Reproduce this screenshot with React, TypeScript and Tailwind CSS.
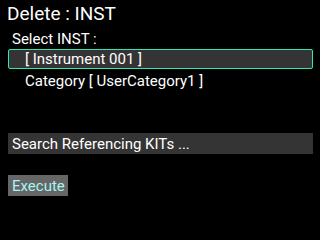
import React from "react";

export default function App() {
  return (
    <div className="w-[320px] h-[240px] bg-black text-white overflow-hidden font-['Roboto',sans-serif]">
      <div className="pl-[7px] pt-[3px] text-[19px] leading-[21px]">Delete : INST</div>
      <div className="pl-[12px] pt-[6px] text-[15px] leading-[18px]">Select INST :</div>
      <div className="mt-[1px] ml-[8px] w-[305px] h-[20px] rounded-[2px] border border-[#2ee6b8] bg-[#343434] flex items-center pl-[16px] text-[15px] leading-[18px]">
        [ Instrument 001 ]
      </div>
      <div className="pl-[25px] pt-[3px] text-[15px] leading-[18px]">Category [ UserCategory1 ]</div>
      <div className="mt-[43px] ml-[8px] w-[305px] h-[21px] bg-[#343434] flex items-center pl-[4px] text-[15px] leading-[18px]">
        Search Referencing KITs ...
      </div>
      <div className="mt-[21px] ml-[8px] w-[60px] h-[21px] bg-[#666666] flex items-center pl-[4px] text-[15px] leading-[18px] text-[#a8f4f4]">
        Execute
      </div>
    </div>
  );
}
